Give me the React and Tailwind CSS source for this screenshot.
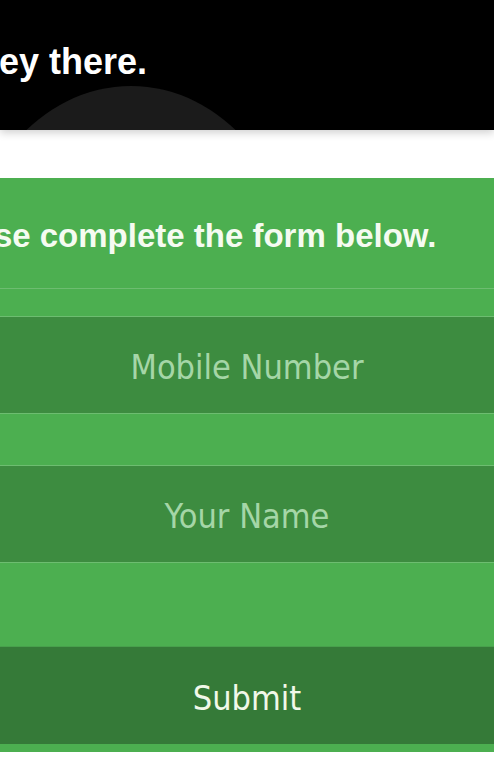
export default function App() {
  return (
    <div className="min-h-[770px] w-[494px] overflow-hidden bg-white font-['Liberation_Sans',Arial,sans-serif]">
      <header className="relative h-[130px] overflow-hidden bg-black shadow-[0_3px_8px_rgba(0,0,0,0.18)]">
        <div className="absolute left-[-36px] top-[86px] h-[400px] w-[334px] rounded-[50%] bg-[#1b1b1b]" />
        <h1 className="relative ml-[-27px] pt-[42px] text-[36px] font-bold leading-[40px] text-white whitespace-nowrap">
          Hey there.
        </h1>
      </header>

      <section className="mt-[48px] bg-[#4caf50] pb-[8px]">
        <h2 className="ml-[-74px] h-[111px] whitespace-nowrap border-b border-[#6dbd70] pt-[40px] text-[33px] font-bold leading-[36px] text-[#f5fbf1]">
          Please complete the form below.
        </h2>
        <form className="flex flex-col pt-[27px] font-['DejaVu_Sans_Condensed','DejaVu_Sans',sans-serif]">
          <input
            type="tel"
            placeholder="Mobile Number"
            className="block h-[98px] w-full border-y border-[#6dbd70] bg-[#3d8c40] bg-clip-padding pt-[30px] pb-[26px] text-center text-[34px] leading-[40px] text-white outline-none placeholder:text-[#a5d6a7]"
          />
          <input
            type="text"
            placeholder="Your Name"
            className="mt-[51px] block h-[98px] w-full border-y border-[#6dbd70] bg-[#3d8c40] bg-clip-padding pt-[30px] pb-[26px] text-center text-[34px] leading-[40px] text-white outline-none placeholder:text-[#a5d6a7]"
          />
          <button
            type="button"
            className="mt-[83px] block h-[98px] w-full border-t border-[#48a04c] bg-[#357a38] bg-clip-padding pt-[31px] pb-[26px] text-center text-[34px] leading-[40px] text-[#f1f8e9]"
          >
            Submit
          </button>
        </form>
      </section>
    </div>
  );
}
